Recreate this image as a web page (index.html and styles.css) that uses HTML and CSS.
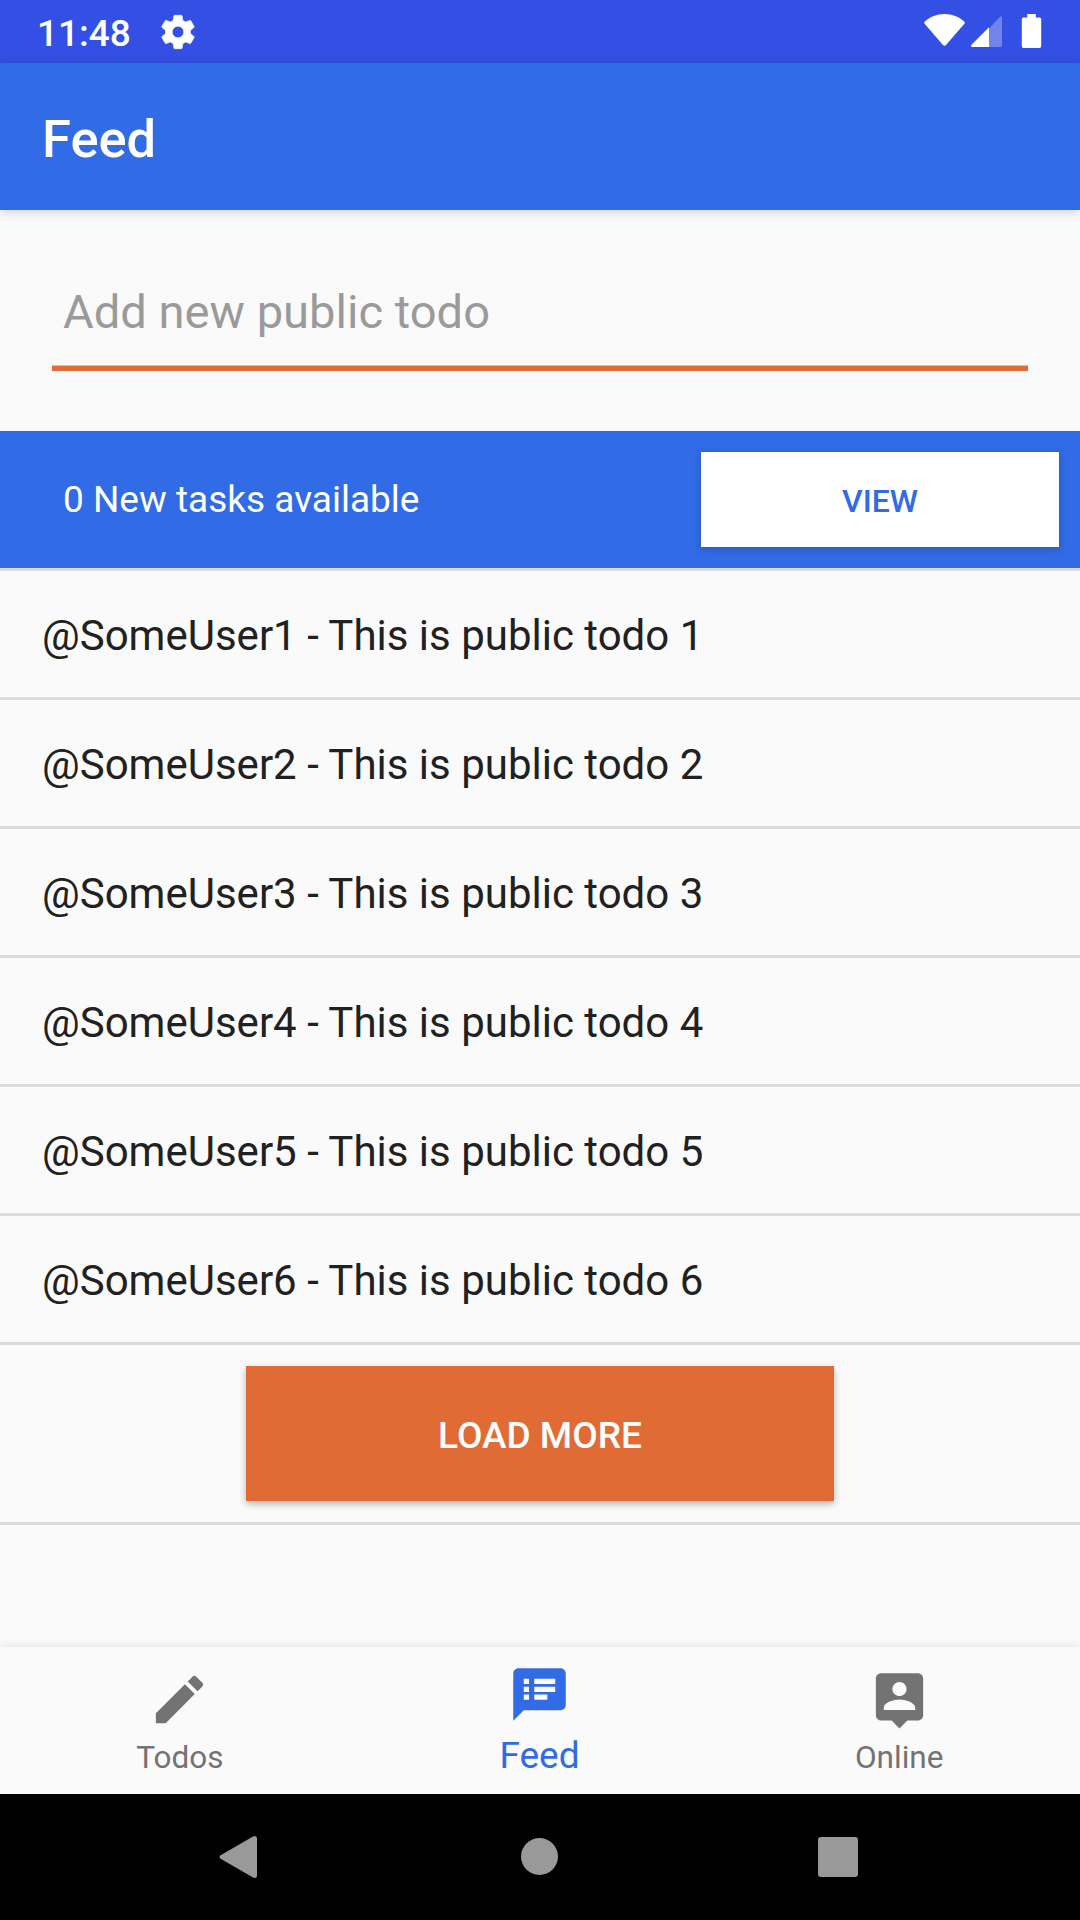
FILE: index.html
```html
<!DOCTYPE html>
<html lang="en">
<head>
<meta charset="utf-8">
<title>Feed</title>
<link rel="stylesheet" href="styles.css">
</head>
<body>
<div class="status">
  <span class="clock">11:48</span>
  <svg class="gear" viewBox="0 0 24 24"><path d="M19.43 12.98c.04-.32.07-.64.07-.98s-.03-.66-.07-.98l2.11-1.65c.19-.15.24-.42.12-.64l-2-3.46c-.12-.22-.39-.3-.61-.22l-2.49 1c-.52-.4-1.08-.73-1.69-.98l-.38-2.65C14.46 2.18 14.25 2 14 2h-4c-.25 0-.46.18-.49.42l-.38 2.65c-.61.25-1.17.59-1.69.98l-2.49-1c-.23-.09-.49 0-.61.22l-2 3.46c-.13.22-.07.49.12.64l2.11 1.65c-.04.32-.07.65-.07.98s.03.66.07.98l-2.11 1.65c-.19.15-.24.42-.12.64l2 3.46c.12.22.39.3.61.22l2.49-1c.52.4 1.08.73 1.69.98l.38 2.65c.03.24.24.42.49.42h4c.25 0 .46-.18.49-.42l.38-2.65c.61-.25 1.17-.59 1.69-.98l2.49 1c.23.09.49 0 .61-.22l2-3.46c.12-.22.07-.49-.12-.64l-2.11-1.65zM12 15.5c-1.93 0-3.5-1.57-3.5-3.5s1.57-3.5 3.5-3.5 3.5 1.57 3.5 3.5-1.570 3.5-3.500 3.500z"/></svg>
  <svg class="signals" viewBox="0 0 120 36">
    <path d="M.8 7.500Q8.500 0 20.500 0T40.200 7.500Q41.200 8.600 40.400 9.800L22 31Q20.500 32.400 19 31L.6 9.800Q-.2 8.600.8 7.500Z"/>
    <path class="faint" d="M65 14.500 76.200 2.700Q78 1.300 78 3.500V31.500Q78 33 76.500 33H65Z"/>
    <path d="M65 13.200V33H48Q46 32.500 47.500 30.700Z"/>
    <path d="M103.200 0h8.600v3.600h3.700q1.700 0 1.700 1.700v26.900q0 1.700-1.700 1.700H99.500q-1.700 0-1.700-1.700V5.300q0-1.700 1.700-1.700h3.700z"/>
  </svg>
</div>
<header class="appbar"><h1 class="title">Feed</h1></header>
<main class="content">
  <div class="entry"><div class="field">Add new public todo</div></div>
  <div class="banner"><span class="banner-text">0 New tasks available</span><button class="view">VIEW</button></div>
  <ul class="list">
    <li class="row">@SomeUser1 - This is public todo 1</li>
    <li class="row">@SomeUser2 - This is public todo 2</li>
    <li class="row">@SomeUser3 - This is public todo 3</li>
    <li class="row">@SomeUser4 - This is public todo 4</li>
    <li class="row">@SomeUser5 - This is public todo 5</li>
    <li class="row">@SomeUser6 - This is public todo 6</li>
  </ul>
  <div class="more"><button class="load">LOAD MORE</button></div>
</main>
<nav class="tabs">
  <div class="tab todos">
    <svg class="icon" viewBox="0 0 24 24"><path d="M3 17.250V21h3.750L17.810 9.940l-3.750-3.750L3 17.250zM20.710 7.040c.39-.39.39-1.020 0-1.410l-2.340-2.340c-.39-.39-1.020-.39-1.410 0l-1.830 1.830 3.750 3.750 1.830-1.830z"/></svg>
    <span class="label">Todos</span>
  </div>
  <div class="tab active">
    <svg class="icon" viewBox="0 0 24 24"><path d="M20 2H4c-1.100 0-1.990.9-1.990 2L2 22l4-4h14c1.100 0 2-.9 2-2V4c0-1.100-.9-2-2-2zM8 14H6v-2h2v2zm0-3H6V9h2v2zm0-3H6V6h2v2zm7 6h-5v-2h5v2zm3-3h-8V9h8v2zm0-3h-8V6h8v2z"/></svg>
    <span class="label">Feed</span>
  </div>
  <div class="tab online">
    <svg class="icon" viewBox="0 0 24 24"><path d="M19 2H5c-1.110 0-2 .9-2 2v14c0 1.100.89 2 2 2h4l3 3 3-3h4c1.100 0 2-.9 2-2V4c0-1.100-.9-2-2-2zm-7 3.300c1.490 0 2.700 1.210 2.700 2.700s-1.210 2.700-2.700 2.700S9.300 9.490 9.300 8s1.210-2.700 2.700-2.700zM18 16H6v-.9c0-2 4-3.100 6-3.100s6 1.100 6 3.100v.9z"/></svg>
    <span class="label">Online</span>
  </div>
</nav>
<div class="sysnav">
  <svg class="key" viewBox="0 0 44 44"><path d="M2.200 20.500 35 1.400Q39 0 39 3.500V40.500Q39 44 35 42.600L2.200 23.500Q.8 22 2.200 20.500Z"/></svg>
  <svg class="key" viewBox="0 0 44 44"><circle cx="22.500" cy="21.500" r="18.500"/></svg>
  <svg class="key" viewBox="0 0 44 44"><rect x="2" y="2" width="40" height="40" rx="3"/></svg>
</div>
</body>
</html>
```
FILE: styles.css
```css
* { box-sizing: border-box; }
body {
  margin: 0;
  width: 1080px;
  height: 1920px;
  display: flex;
  flex-direction: column;
  background: #fafafa;
  color: #212121;
  font-family: Roboto, sans-serif;
  overflow: hidden;
}
svg { display: block; flex: none; }
button { border: 0; margin: 0; font-family: inherit; font-weight: 500; }

.status {
  height: 63px;
  flex: none;
  display: flex;
  align-items: center;
  padding-left: 37px;
  background: #344fe4;
  color: #fff;
  fill: #fff;
}
.clock { width: 121px; padding-top: 5px; font-size: 37px; line-height: 44px; font-weight: 500; }
.gear { width: 40px; height: 40px; stroke: #fff; stroke-width: .4; }
.signals { width: 120px; height: 36px; margin: 1px 36px 0 auto; }
.faint { opacity: .3; }

.appbar {
  height: 147px;
  flex: none;
  display: flex;
  align-items: center;
  padding: 5px 42px 0;
  background: #316be5;
  color: #fff;
  box-shadow: 0 2px 10px rgba(0, 0, 0, .17);
}
.title { margin: 0; font-size: 52.5px; line-height: 62px; font-weight: 500; }

.content { flex: 1; }
.entry { height: 221px; padding: 60px 52px; }
.field {
  height: 101px;
  padding: 14px 11px 0;
  border-bottom: 5px solid #e16b34;
  box-shadow: inset 0 -1px #f0b59a;
  color: #9a9a9a;
  font-size: 47.12px;
  line-height: 56px;
}
.banner {
  height: 137px;
  display: flex;
  align-items: center;
  justify-content: space-between;
  padding: 0 21px 0 63px;
  background: #316be5;
  color: #fff;
}
.banner-text { font-size: 37px; line-height: 44px; }
.view {
  width: 358px;
  height: 95px;
  padding: 3px 0 0;
  background: #fff;
  color: #316be5;
  font-size: 32px;
  box-shadow: 0 2px 8px rgba(0, 0, 0, .2);
}
.list { list-style: none; margin: 0; padding: 0; border-top: 3px solid #dcdcdc; }
.row {
  height: 129px;
  padding: 2px 42px 0;
  border-bottom: 3px solid #dcdcdc;
  font-size: 42px;
  line-height: 126px;
}
.more {
  height: 180px;
  display: flex;
  justify-content: center;
  align-items: center;
  border-bottom: 3px solid #dcdcdc;
}
.load {
  width: 588px;
  height: 135px;
  padding: 4px 0 0;
  background: #e16b34;
  color: #fff;
  font-size: 37px;
  box-shadow: 0 3px 7px rgba(0, 0, 0, .28);
}

.tabs {
  height: 147px;
  flex: none;
  display: flex;
  padding-right: 1px;
  background: #fafafa;
  color: #737373;
  fill: #737373;
  box-shadow: 0 -1px 8px rgba(0, 0, 0, .1);
}
.tab {
  flex: 1;
  display: flex;
  flex-direction: column;
  align-items: center;
  padding-top: 21px;
  font-size: 31.5px;
  line-height: 38px;
}
.icon { width: 63px; height: 63px; }
.label { margin-top: 8px; }
.active { padding-top: 16px; color: #316be5; fill: #316be5; font-size: 37px; line-height: 44px; }

.sysnav {
  height: 126px;
  flex: none;
  display: flex;
  align-items: center;
  justify-content: space-between;
  padding: 0 220px 0 218px;
  background: #000;
  fill: #999;
}
.key { width: 44px; height: 44px; }
```
